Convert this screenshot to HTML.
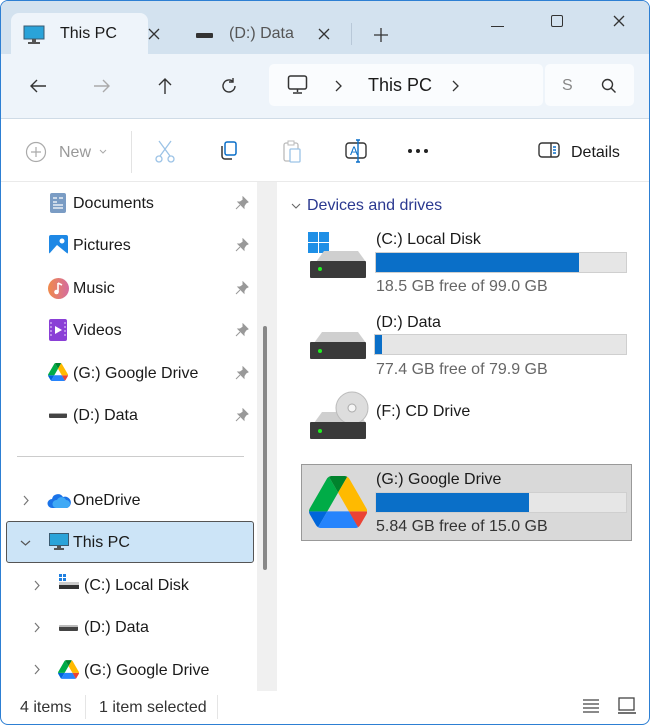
<!DOCTYPE html>
<html><head><meta charset="utf-8"><style>
*{margin:0;padding:0;box-sizing:border-box}
body{width:650px;height:725px;overflow:hidden;font-family:"Liberation Sans",sans-serif;background:#fff;position:relative;color:#1a1a1a}
.a{position:absolute}
.t{font-size:16px;white-space:nowrap}
.win{position:absolute;left:0;top:0;width:650px;height:725px;border:1.5px solid #2d7fd3;border-radius:8px;overflow:hidden;background:#fff}
.bar{height:16px;background:#e6e6e6;border:1px solid #cfcfcf}
.fill{height:100%;background:#0a6fc8}
.chev{color:#777;font-size:15px}
</style></head><body>
<div class="win">
<div class="a" style="left:0;top:0;width:650px;height:53px;background:#d3e2ef"></div>
<div class="a" style="left:10px;top:12px;width:137px;height:42px;background:#eef4fa;border-radius:8px 8px 0 0"></div>
<svg class="a" style="left:22px;top:24px" width="22" height="20"><rect x="1" y="1" width="20" height="13" fill="#2aa3d9" stroke="#3a5a70"/><rect x="9" y="14" width="4" height="3" fill="#555"/><rect x="5" y="17" width="12" height="2" fill="#555"/></svg>
<div class="a t" style="left:59px;top:24px">This PC</div>
<svg class="a" style="left:147px;top:27px" width="12" height="12"><path d="M1 1l10 10M11 1L1 11" stroke="#333" stroke-width="1.3"/></svg>
<div class="a" style="left:195px;top:32px;width:17px;height:5px;background:#333;border-radius:1px"></div>
<div class="a t" style="left:228px;top:24px;color:#555">(D:) Data</div>
<svg class="a" style="left:317px;top:27px" width="12" height="12"><path d="M1 1l10 10M11 1L1 11" stroke="#333" stroke-width="1.3"/></svg>
<div class="a" style="left:350px;top:22px;width:1px;height:22px;background:#b8c8d8"></div>
<svg class="a" style="left:373px;top:27px" width="14" height="14"><path d="M7 0v14M0 7h14" stroke="#333" stroke-width="1.3"/></svg>
<div class="a" style="left:490px;top:25px;width:13px;height:1px;background:#333"></div>
<div class="a" style="left:550px;top:14px;width:12px;height:12px;border:1.5px solid #333;border-radius:2px"></div>
<svg class="a" style="left:612px;top:14px" width="12" height="12"><path d="M1 1l10 10M11 1L1 11" stroke="#333" stroke-width="1.3"/></svg>
<div class="a" style="left:0;top:53px;width:650px;height:64px;background:#eef4fa"></div>
<svg class="a" style="left:28px;top:77px" width="18" height="16"><path d="M17 8H2M8 2L2 8l6 6" fill="none" stroke="#333" stroke-width="1.4"/></svg>
<svg class="a" style="left:92px;top:77px" width="18" height="16"><path d="M1 8h15M10 2l6 6-6 6" fill="none" stroke="#aaa" stroke-width="1.4"/></svg>
<svg class="a" style="left:156px;top:76px" width="16" height="18"><path d="M8 17V2M2 8l6-6 6 6" fill="none" stroke="#333" stroke-width="1.4"/></svg>
<svg class="a" style="left:219px;top:76px" width="18" height="18"><path d="M15 9a6 6 0 1 1-2-4.5" fill="none" stroke="#333" stroke-width="1.4"/><path d="M13 1v4h-4" fill="none" stroke="#333" stroke-width="1.4"/></svg>
<div class="a" style="left:268px;top:63px;width:274px;height:42px;background:#fafcfe;border-radius:5px"></div>
<svg class="a" style="left:286px;top:74px" width="22" height="20"><rect x="1.5" y="1" width="18" height="13" rx="2" fill="none" stroke="#333" stroke-width="1.5"/><path d="M10.5 14v3M6 18h9" stroke="#333" stroke-width="1.5"/></svg>
<svg class="a" style="left:334px;top:79px" width="8" height="12"><path d="M1 1l5 5-5 5" fill="none" stroke="#333" stroke-width="1.3"/></svg>
<div class="a t" style="left:367px;top:74px;font-size:18px">This PC</div>
<svg class="a" style="left:451px;top:79px" width="8" height="12"><path d="M1 1l5 5-5 5" fill="none" stroke="#333" stroke-width="1.3"/></svg>
<div class="a" style="left:544px;top:63px;width:89px;height:42px;background:#fafcfe;border-radius:5px"></div>
<div class="a t" style="left:561px;top:76px;color:#888">S</div>
<svg class="a" style="left:600px;top:77px" width="16" height="16"><circle cx="6.5" cy="6.5" r="5" fill="none" stroke="#333" stroke-width="1.4"/><path d="M10 10l4.5 4.5" stroke="#333" stroke-width="1.4"/></svg>
<div class="a" style="left:0;top:117px;width:650px;height:1px;background:#cfdbe6"></div>
<svg class="a" style="left:24px;top:140px" width="22" height="22"><circle cx="11" cy="11" r="9.5" fill="none" stroke="#aaa" stroke-width="1.2"/><path d="M11 6v10M6 11h10" stroke="#aaa" stroke-width="1.2"/></svg>
<div class="a t" style="left:58px;top:143px;color:#999">New</div>
<svg class="a" style="left:98px;top:148px" width="8" height="6"><path d="M1 1l3 3 3-3" fill="none" stroke="#aaa"/></svg>
<div class="a" style="left:130px;top:130px;width:1px;height:42px;background:#e3e3e3"></div>
<svg class="a" style="left:153px;top:138px" width="22" height="26"><path d="M5 2l11 15M17 2L6 17" stroke="#9cc3e6" stroke-width="1.3"/><circle cx="5" cy="20" r="3" fill="none" stroke="#9cc3e6" stroke-width="1.3"/><circle cx="17" cy="20" r="3" fill="none" stroke="#9cc3e6" stroke-width="1.3"/></svg>
<svg class="a" style="left:217px;top:139px" width="22" height="22"><rect x="7" y="2" width="11" height="13" rx="2" fill="none" stroke="#0a6fc8" stroke-width="1.5"/><path d="M4 6v10a3 3 0 0 0 3 3h7" fill="none" stroke="#333" stroke-width="1.5"/></svg>
<svg class="a" style="left:280px;top:138px" width="22" height="26"><rect x="3" y="4" width="14" height="18" rx="2" fill="none" stroke="#bbb" stroke-width="1.3"/><rect x="7" y="2" width="6" height="4" fill="#fff" stroke="#bbb"/><rect x="9" y="10" width="10" height="13" rx="1" fill="#fff" stroke="#9cc3e6" stroke-width="1.3"/></svg>
<svg class="a" style="left:343px;top:138px" width="24" height="24"><rect x="2" y="4" width="20" height="15" rx="3" fill="none" stroke="#333" stroke-width="1.4"/><text x="6" y="16" font-size="12" fill="#0a6fc8" font-family="Liberation Sans">A</text><path d="M14 1v22M12 1h4M12 23h4" stroke="#0a6fc8" stroke-width="1.4"/></svg>
<svg class="a" style="left:406px;top:147px" width="22" height="6"><circle cx="3" cy="3" r="2" fill="#222"/><circle cx="11" cy="3" r="2" fill="#222"/><circle cx="19" cy="3" r="2" fill="#222"/></svg>
<svg class="a" style="left:537px;top:140px" width="24" height="20"><rect x="1" y="2" width="20" height="14" rx="3" fill="none" stroke="#333" stroke-width="1.4"/><path d="M13 2v14" stroke="#333" stroke-width="1.4"/><path d="M15 6h3M15 9h3M15 12h3" stroke="#0a6fc8" stroke-width="1.4"/></svg>
<div class="a t" style="left:570px;top:143px">Details</div>
<div class="a" style="left:0;top:180px;width:650px;height:1px;background:#eaeaea"></div>
<!-- sidebar -->
<div class="a" style="left:256px;top:181px;width:20px;height:509px;background:#f0f0f0"></div>
<div class="a" style="left:262px;top:325px;width:4px;height:244px;background:#888;border-radius:2px"></div>
<svg class="a" style="left:49px;top:192px" width="16" height="20"><rect x="0" y="0" width="16" height="20" rx="2" fill="#7a9cc4"/><path d="M3 5h4M9 5h4M3 9h4M3 12h10M3 15h10" stroke="#fff" stroke-width="1.3"/></svg>
<div class="a t" style="left:72px;top:194px">Documents</div>
<svg class="a" style="left:48px;top:234px" width="19" height="19"><rect width="19" height="19" rx="2" fill="#1e88e5"/><path d="M0 19L8 10l11 9z" fill="#fff"/><circle cx="13" cy="6" r="2.5" fill="#fff"/></svg>
<div class="a t" style="left:72px;top:236px">Pictures</div>
<svg class="a" style="left:47px;top:277px" width="21" height="21"><defs><linearGradient id="m" x1="0" x2="1"><stop offset="0" stop-color="#f08a4b"/><stop offset="1" stop-color="#d46ca0"/></linearGradient></defs><circle cx="10.5" cy="10.5" r="10.5" fill="url(#m)"/><path d="M10 5v9" stroke="#fff" stroke-width="1.6"/><circle cx="8.5" cy="14" r="2.3" fill="#fff"/><path d="M10 5l4 2" stroke="#fff" stroke-width="1.6"/></svg>
<div class="a t" style="left:72px;top:279px">Music</div>
<svg class="a" style="left:48px;top:318px" width="18" height="22"><rect width="18" height="22" rx="2" fill="#8a3fd6"/><path d="M6 7l7 4-7 4z" fill="#fff"/><path d="M2 3v16M16 3v16" stroke="#c9a3f0" stroke-width="1.5" stroke-dasharray="2 2"/></svg>
<div class="a t" style="left:72px;top:321px">Videos</div>
<svg class="a" style="left:47px;top:362px" width="20" height="18" viewBox="0 0 87 78"><path d="M6.6 66.85l3.85 6.65c.8 1.4 1.95 2.5 3.3 3.3L27.5 53H0c0 1.55.4 3.1 1.2 4.5z" fill="#0066da"/><path d="M43.65 25L29.9 1.2c-1.35.8-2.5 1.9-3.3 3.3l-25.4 44A9.06 9.06 0 0 0 0 53h27.5z" fill="#00ac47"/><path d="M73.55 76.8c1.35-.8 2.5-1.9 3.3-3.3l1.6-2.75 7.65-13.25c.8-1.4 1.2-2.95 1.2-4.5H59.8l5.85 11.5z" fill="#ea4335"/><path d="M43.65 25L57.4 1.2C56.05.4 54.5 0 52.9 0H34.4c-1.6 0-3.15.45-4.5 1.2z" fill="#00832d"/><path d="M59.8 53H27.5L13.75 76.8c1.35.8 2.9 1.2 4.5 1.2h50.8c1.6 0 3.15-.45 4.5-1.2z" fill="#2684fc"/><path d="M73.4 26.5L60.7 4.5c-.8-1.4-1.95-2.5-3.3-3.3L43.65 25 59.8 53h27.45c0-1.55-.4-3.1-1.2-4.5z" fill="#ffba00"/></svg>
<div class="a t" style="left:72px;top:364px">(G:) Google Drive</div>
<div class="a" style="left:48px;top:412px;width:18px;height:5px;background:#444;border-radius:1px;border-top:1px solid #aaa"></div>
<div class="a t" style="left:72px;top:406px">(D:) Data</div>
<svg class="a" style="left:234px;top:195px" width="14" height="14"><path d="M8 1l5 5-2 1-2 3 0 2-6-6 2 0 3-2zM5 9l-4 4" fill="#999" stroke="#999"/></svg>
<svg class="a" style="left:234px;top:237px" width="14" height="14"><path d="M8 1l5 5-2 1-2 3 0 2-6-6 2 0 3-2zM5 9l-4 4" fill="#999" stroke="#999"/></svg>
<svg class="a" style="left:234px;top:280px" width="14" height="14"><path d="M8 1l5 5-2 1-2 3 0 2-6-6 2 0 3-2zM5 9l-4 4" fill="#999" stroke="#999"/></svg>
<svg class="a" style="left:234px;top:322px" width="14" height="14"><path d="M8 1l5 5-2 1-2 3 0 2-6-6 2 0 3-2zM5 9l-4 4" fill="#999" stroke="#999"/></svg>
<svg class="a" style="left:234px;top:365px" width="14" height="14"><path d="M8 1l5 5-2 1-2 3 0 2-6-6 2 0 3-2zM5 9l-4 4" fill="#999" stroke="#999"/></svg>
<svg class="a" style="left:234px;top:407px" width="14" height="14"><path d="M8 1l5 5-2 1-2 3 0 2-6-6 2 0 3-2zM5 9l-4 4" fill="#999" stroke="#999"/></svg>
<div class="a" style="left:16px;top:455px;width:227px;height:1px;background:#ccc"></div>
<svg class="a" style="left:22px;top:494px" width="7" height="11"><path d="M1 1l4 4.5-4 4.5" fill="none" stroke="#777" stroke-width="1.2"/></svg>
<svg class="a" style="left:46px;top:492px" width="24" height="16"><path d="M5 15a4.5 4.5 0 0 1 0-9 6 6 0 0 1 11-2 5 5 0 0 1 4 11z" fill="#1a73e8"/><path d="M9 15a4 4 0 0 1 1-8 5 5 0 0 1 9 0 4 4 0 0 1 0 8z" fill="#3fa9f5"/></svg>
<div class="a t" style="left:72px;top:491px">OneDrive</div>
<div class="a" style="left:5px;top:520px;width:248px;height:42px;background:#cce4f7;border:1px solid #555;border-radius:3px"></div>
<svg class="a" style="left:19px;top:539px" width="11" height="7"><path d="M1 1l4.5 4 4.5-4" fill="none" stroke="#555" stroke-width="1.2"/></svg>
<svg class="a" style="left:48px;top:532px" width="20" height="18"><rect x="0.5" y="0.5" width="19" height="12" fill="#2aa3d9" stroke="#3a5a70"/><rect x="8" y="13" width="4" height="2" fill="#555"/><rect x="5" y="15" width="10" height="2" fill="#555"/></svg>
<div class="a t" style="left:72px;top:533px">This PC</div>
<svg class="a" style="left:33px;top:579px" width="7" height="11"><path d="M1 1l4 4.5-4 4.5" fill="none" stroke="#777" stroke-width="1.2"/></svg>
<svg class="a" style="left:58px;top:573px" width="20" height="16"><rect x="0" y="0" width="3" height="3" fill="#1e7fe0"/><rect x="4" y="0" width="3" height="3" fill="#1e7fe0"/><rect x="0" y="4" width="3" height="3" fill="#1e7fe0"/><rect x="4" y="4" width="3" height="3" fill="#1e7fe0"/><rect x="0" y="8" width="20" height="3" fill="#ccc"/><rect x="0" y="11" width="20" height="4" fill="#333"/></svg>
<div class="a t" style="left:83px;top:576px">(C:) Local Disk</div>
<svg class="a" style="left:33px;top:621px" width="7" height="11"><path d="M1 1l4 4.5-4 4.5" fill="none" stroke="#777" stroke-width="1.2"/></svg>
<div class="a" style="left:58px;top:624px;width:19px;height:6px;background:#444;border-top:2px solid #bbb;border-radius:1px"></div>
<div class="a t" style="left:83px;top:618px">(D:) Data</div>
<svg class="a" style="left:33px;top:663px" width="7" height="11"><path d="M1 1l4 4.5-4 4.5" fill="none" stroke="#777" stroke-width="1.2"/></svg>
<svg class="a" style="left:57px;top:659px" width="21" height="19" viewBox="0 0 87 78"><path d="M6.6 66.85l3.85 6.65c.8 1.4 1.95 2.5 3.3 3.3L27.5 53H0c0 1.55.4 3.1 1.2 4.5z" fill="#0066da"/><path d="M43.65 25L29.9 1.2c-1.35.8-2.5 1.9-3.3 3.3l-25.4 44A9.06 9.06 0 0 0 0 53h27.5z" fill="#00ac47"/><path d="M73.55 76.8c1.35-.8 2.5-1.9 3.3-3.3l1.6-2.75 7.65-13.25c.8-1.4 1.2-2.95 1.2-4.5H59.8l5.85 11.5z" fill="#ea4335"/><path d="M43.65 25L57.4 1.2C56.05.4 54.5 0 52.9 0H34.4c-1.6 0-3.15.45-4.5 1.2z" fill="#00832d"/><path d="M59.8 53H27.5L13.75 76.8c1.35.8 2.9 1.2 4.5 1.2h50.8c1.6 0 3.15-.45 4.5-1.2z" fill="#2684fc"/><path d="M73.4 26.5L60.7 4.5c-.8-1.4-1.95-2.5-3.3-3.3L43.65 25 59.8 53h27.45c0-1.55-.4-3.1-1.2-4.5z" fill="#ffba00"/></svg>
<div class="a t" style="left:83px;top:661px">(G:) Google Drive</div>
<!-- content -->
<svg class="a" style="left:290px;top:202px" width="10" height="7"><path d="M1 1l4 4 4-4" fill="none" stroke="#666" stroke-width="1.1"/></svg>
<div class="a t" style="left:306px;top:196px;color:#2b3990">Devices and drives</div>
<svg class="a" style="left:307px;top:231px" width="58" height="48"><rect x="0" y="0" width="10" height="10" fill="#1e8fe6"/><rect x="11" y="0" width="10" height="10" fill="#1e8fe6"/><rect x="0" y="11" width="10" height="10" fill="#1e8fe6"/><rect x="11" y="11" width="10" height="10" fill="#1e8fe6"/><path d="M8 30L16 19h34l8 11z" fill="#cfcfcf"/><rect x="2" y="29" width="56" height="17" rx="1" fill="#3a3a3a"/><circle cx="12" cy="37" r="2" fill="#2e2"/></svg>
<div class="a t" style="left:375px;top:230px">(C:) Local Disk</div>
<div class="a bar" style="left:374px;top:251px;width:252px;height:21px"><div class="fill" style="width:203px"></div></div>
<div class="a t" style="left:375px;top:277px;color:#666">18.5 GB free of 99.0 GB</div>
<svg class="a" style="left:307px;top:330px" width="58" height="30"><path d="M6 12L14 1h36l8 11z" fill="#cfcfcf"/><rect x="2" y="11" width="56" height="17" rx="1" fill="#3a3a3a"/><circle cx="12" cy="20" r="2" fill="#2e2"/></svg>
<div class="a t" style="left:375px;top:313px">(D:) Data</div>
<div class="a bar" style="left:373px;top:333px;width:253px;height:21px"><div class="fill" style="width:7px"></div></div>
<div class="a t" style="left:375px;top:360px;color:#666">77.4 GB free of 79.9 GB</div>
<svg class="a" style="left:307px;top:390px" width="62" height="50"><path d="M6 32L14 21h36l8 11z" fill="#cfcfcf"/><circle cx="44" cy="17" r="16" fill="#ddd" stroke="#bbb"/><circle cx="44" cy="17" r="4" fill="#f5f5f5" stroke="#aaa"/><rect x="2" y="31" width="56" height="17" rx="1" fill="#3a3a3a"/><circle cx="12" cy="40" r="2" fill="#2e2"/></svg>
<div class="a t" style="left:375px;top:402px">(F:) CD Drive</div>
<div class="a" style="left:300px;top:463px;width:331px;height:77px;background:#d9d9d9;border:1px solid #999"></div>
<svg class="a" style="left:308px;top:475px" width="58" height="52" viewBox="0 0 87 78"><path d="M6.6 66.85l3.85 6.65c.8 1.4 1.95 2.5 3.3 3.3L27.5 53H0c0 1.55.4 3.1 1.2 4.5z" fill="#0066da"/><path d="M43.65 25L29.9 1.2c-1.35.8-2.5 1.9-3.3 3.3l-25.4 44A9.06 9.06 0 0 0 0 53h27.5z" fill="#00ac47"/><path d="M73.55 76.8c1.35-.8 2.5-1.9 3.3-3.3l1.6-2.75 7.65-13.25c.8-1.4 1.2-2.95 1.2-4.5H59.8l5.85 11.5z" fill="#ea4335"/><path d="M43.65 25L57.4 1.2C56.05.4 54.5 0 52.9 0H34.4c-1.6 0-3.15.45-4.5 1.2z" fill="#00832d"/><path d="M59.8 53H27.5L13.75 76.8c1.35.8 2.9 1.2 4.5 1.2h50.8c1.6 0 3.15-.45 4.5-1.2z" fill="#2684fc"/><path d="M73.4 26.5L60.7 4.5c-.8-1.4-1.95-2.5-3.3-3.3L43.65 25 59.8 53h27.45c0-1.55-.4-3.1-1.2-4.5z" fill="#ffba00"/></svg>
<div class="a t" style="left:375px;top:470px">(G:) Google Drive</div>
<div class="a bar" style="left:374px;top:491px;width:252px;height:21px"><div class="fill" style="width:153px"></div></div>
<div class="a t" style="left:375px;top:517px;color:#333">5.84 GB free of 15.0 GB</div>
<div class="a t" style="left:19px;top:698px;color:#333">4 items</div>
<div class="a" style="left:84px;top:694px;width:1px;height:24px;background:#e5e5e5"></div>
<div class="a t" style="left:98px;top:698px;color:#333">1 item selected</div>
<div class="a" style="left:216px;top:694px;width:1px;height:24px;background:#e5e5e5"></div>
<svg class="a" style="left:581px;top:697px" width="18" height="16"><path d="M1 2h16M1 6h16M1 10h16M1 14h16" stroke="#444" stroke-width="1.3"/></svg>
<svg class="a" style="left:616px;top:696px" width="20" height="18"><rect x="2" y="1" width="15" height="12" fill="none" stroke="#444" stroke-width="1.3"/><path d="M1 16h18" stroke="#444" stroke-width="1.5"/></svg>
</div>
</body></html>
